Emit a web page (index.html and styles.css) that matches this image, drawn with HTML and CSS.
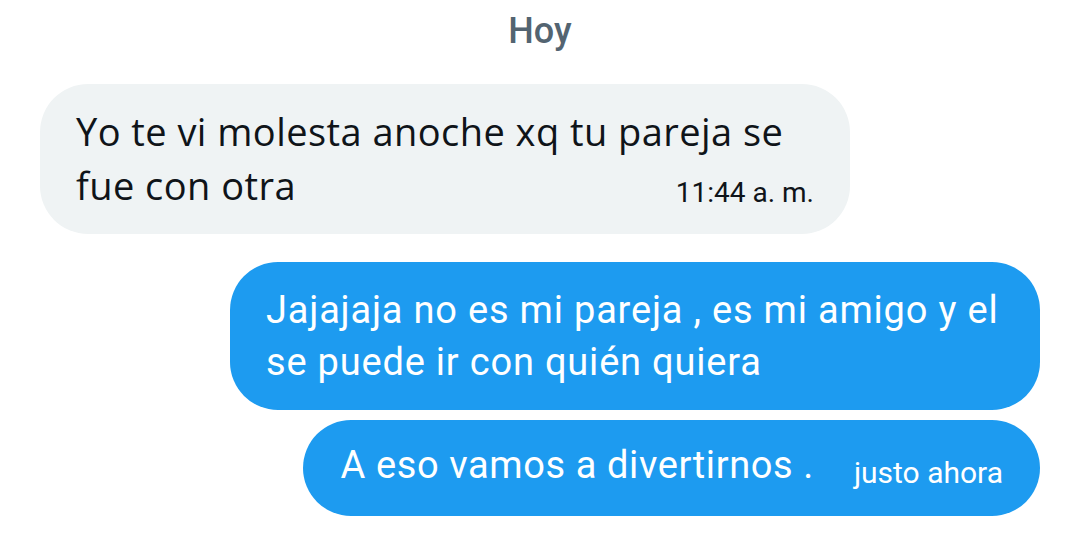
FILE: index.html
```html
<!DOCTYPE html>
<html>
<head>
    <meta charset="UTF-8">
    <title>Mensajes</title>
    <link rel="stylesheet" href="styles.css">
</head>
<body>
    <div class="chat">
        <div class="day">Hoy</div>

        <div class="row row-in">
            <div class="bubble bubble-in">
                <span class="text">Yo te vi molesta anoche xq tu pareja se fue con otra</span>
                <span class="time time-in">11:44 a. m.</span>
            </div>
        </div>

        <div class="row row-out">
            <div class="bubble bubble-out first">
                <span class="text">Jajajaja no es mi pareja , es mi amigo y el se puede ir con quién quiera</span>
            </div>
        </div>

        <div class="row row-out">
            <div class="bubble bubble-out last">
                <span class="text">A eso vamos a divertirnos .</span>
                <span class="time time-out">justo ahora</span>
            </div>
        </div>
    </div>
</body>
</html>
```

FILE: styles.css
```css
body {
    margin: 0;
    background-color: #ffffff;
    font-family: Roboto, "Liberation Sans", sans-serif;
}
.chat {
    display: flex;
    flex-direction: column;
    padding: 9px 40px 0 40px;
}
.day {
    text-align: center;
    font-size: 36px;
    font-weight: 500;
    color: #536471;
    line-height: 44px;
    margin-bottom: 31px;
}
.row {
    display: flex;
}
.row-in {
    justify-content: flex-start;
}
.row-out {
    justify-content: flex-end;
}
.bubble {
    border-radius: 48px;
    box-sizing: border-box;
}
.bubble-in {
    width: 810px;
    background-color: #eff3f4;
    color: #0f1419;
    font-family: "Open Sans", Roboto, sans-serif;
    font-size: 38px;
    letter-spacing: 0.45px;
    line-height: 54px;
    padding: 20px 36px 22px 36px;
}
.bubble-out {
    background-color: #1d9bf0;
    color: #ffffff;
    font-size: 38px;
    letter-spacing: 0.8px;
    line-height: 52px;
}
.first {
    width: 810px;
    margin-top: 28px;
    padding: 22px 36px 22px 36px;
}
.last {
    margin-top: 10px;
    padding: 19px 37px 25px 38px;
    display: flex;
    align-items: flex-end;
    gap: 40px;
    letter-spacing: 0.6px;
}
.time {
    letter-spacing: 0;
}
.time-in {
    float: right;
    font-family: Roboto, sans-serif;
    font-size: 28px;
    line-height: 38px;
    margin-top: 16px;
    color: #0f1419;
}
.time-out {
    font-size: 30px;
    line-height: 36px;
}
```
